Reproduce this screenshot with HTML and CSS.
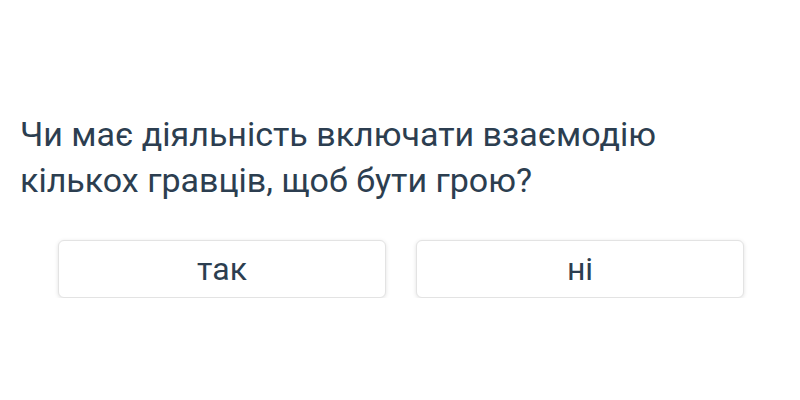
FILE: index.html
```html
<!doctype html>
<html>
  <head>
    <meta charset="utf-8"/>
    <meta name="viewport" content="width=device-width, initial-scale=1.0">
    <title>Питання</title>
    <link rel="stylesheet" href="styles.css">
  </head>
  <body>
    <div id="question">
      <h2>Чи має діяльність включати взаємодію кількох гравців, щоб бути грою?</h2>
      <div class="answers">
        <button class="answer">так</button>
        <button class="answer">ні</button>
      </div>
    </div>
  </body>
</html>
```

FILE: styles.css
```css
* {
  padding: 0;
  margin: 0;
  box-sizing: border-box;
}

body {
  background: #fff;
  color: #2c3e50;
  font-family: Roboto, "Noto Sans", sans-serif;
}

#question {
  padding: 111px 20px 0 20px;
}

#question h2 {
  font-size: 34px;
  font-weight: 400;
  line-height: 46px;
  max-width: 700px;
}

.answers {
  display: flex;
  gap: 30px;
  margin: 37px 36px 0 38px;
}

.answer {
  flex: 1;
  height: 58px;
  background: #fff;
  border: 1px solid #e3e3e3;
  border-radius: 6px;
  box-shadow: 0 1px 4px rgba(0, 0, 0, 0.12);
  color: #2c3e50;
  font-family: Roboto, "Noto Sans", sans-serif;
  font-size: 32px;
}
```
